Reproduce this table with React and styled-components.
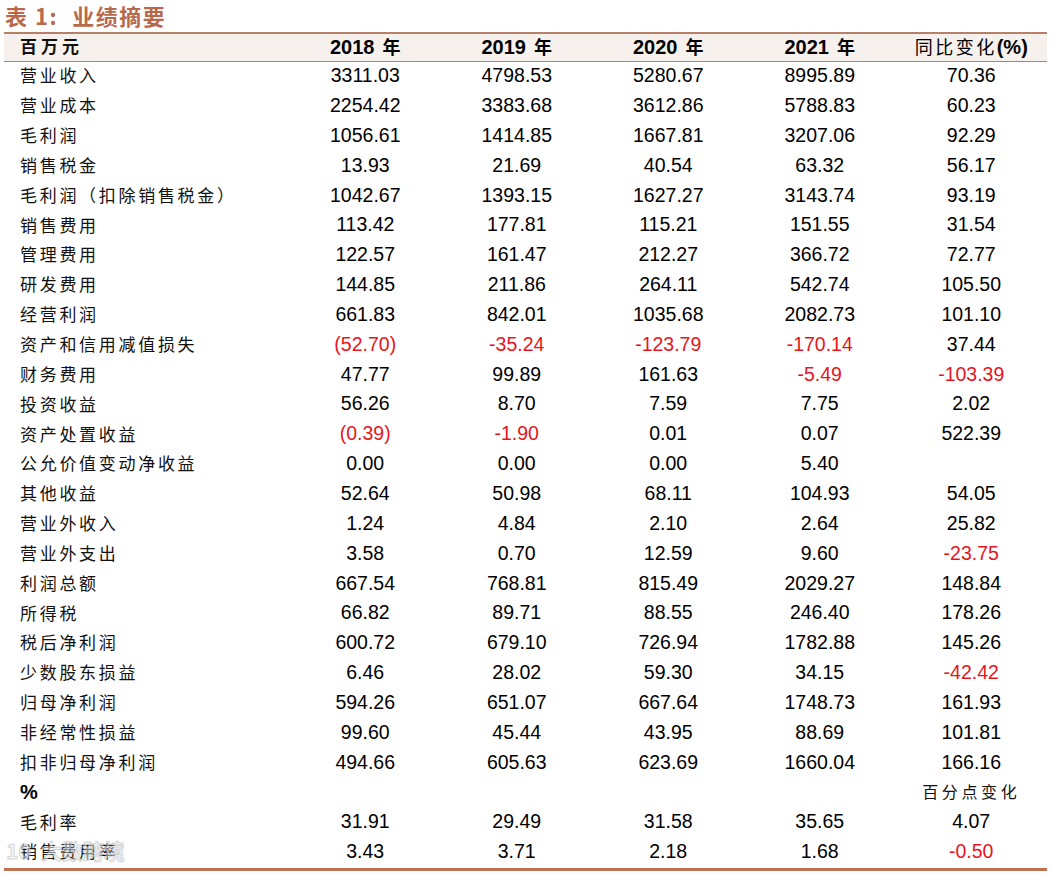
import React from "react";
import styled, {createGlobalStyle} from "styled-components";

const GlobalStyle = createGlobalStyle`
    body {
        margin: 0;
        background: #fff;
        font-family: "Liberation Sans", Arial, "Noto Sans CJK SC", sans-serif;
    }
`;

const BROWN = "#b8694b";
const RED = "#e8141c";

const Page = styled.div`
    position: relative;
    width: 1055px;
    height: 875px;
    padding: 0 0 0 4px;
    box-sizing: border-box;
    overflow: hidden;
`;

const Title = styled.div`
    height: 32px;
    display: flex;
    align-items: center;
    padding: 0 0 3px 1px;
    box-sizing: border-box;
    font-family: "Noto Sans CJK SC", sans-serif;
    font-weight: 700;
    font-size: 22px;
    color: ${BROWN};
    letter-spacing: 1.5px;

    span {
        margin-left: 14px;
    }
`;

const Table = styled.div`
    width: 1043px;
    border-top: 2px solid #b98068;
    border-bottom: 3px solid #c0714f;
`;

const Row = styled.div`
    display: grid;
    grid-template-columns: 285.5px repeat(5, 151.5px);
    height: ${({head}) => (head ? "27px" : "29.85px")};
    align-items: center;
    background: ${({head}) => (head ? "#f7f1ee" : "transparent")};
    border-bottom: ${({head}) => (head ? "1px solid #b98068" : "none")};
`;

const Label = styled.div`
    padding: 0 0 4px 16px;
    font-family: "Noto Sans CJK SC", sans-serif;
    font-size: 17px;
    letter-spacing: ${({bold}) => (bold ? "4px" : "2.7px")};
    font-weight: ${({bold}) => (bold ? 700 : 400)};
    color: #111;
    white-space: nowrap;
    line-height: 1;
`;

const Pct = styled.div`
    padding: 0 0 2px 16px;
    font-family: "Liberation Sans", Arial, sans-serif;
    font-weight: 700;
    font-size: 20px;
    color: #000;
`;

const Cell = styled.div`
    padding-bottom: 2px;
    text-align: center;
    font-family: "Liberation Sans", Arial, sans-serif;
    font-size: 19.5px;
    color: ${({neg}) => (neg ? RED : "#000")};
    line-height: 1;
`;

const HeadCell = styled.div`
    padding-bottom: 2px;
    text-align: center;
    font-family: "Liberation Sans", Arial, "Noto Sans CJK SC", sans-serif;
    font-weight: 700;
    font-size: 20px;
    color: #000;
    line-height: 1;

    small {
        font-family: "Noto Sans CJK SC", sans-serif;
        font-size: 18px;
        margin-left: 8px;
    }
`;

const HeadCjk = styled.div`
    padding-bottom: 2px;
    text-align: center;
    font-family: "Noto Sans CJK SC", sans-serif;
    font-size: 18px;
    letter-spacing: 2.5px;
    color: #000;
    line-height: 1;

    b {
        font-family: "Liberation Sans", Arial, sans-serif;
        font-weight: 700;
        font-size: 20px;
        letter-spacing: 0;
    }
`;

const Note = styled.div`
    padding-bottom: 4px;
    text-align: center;
    font-family: "Noto Sans CJK SC", sans-serif;
    font-size: 16px;
    letter-spacing: 3.6px;
    color: #111;
    line-height: 1;
`;

const Watermark = styled.div`
    position: absolute;
    left: 6px;
    bottom: 10px;
    display: flex;
    align-items: center;
    gap: 10px;
    font-family: "Noto Sans CJK SC", sans-serif;
    font-size: 21px;
    font-weight: 700;
    color: rgba(235, 235, 235, 0.55);
    -webkit-text-stroke: 1px rgba(170, 170, 170, 0.45);
    pointer-events: none;
`;

const rows = [
    ["营业收入", "3311.03", "4798.53", "5280.67", "8995.89", "70.36"],
    ["营业成本", "2254.42", "3383.68", "3612.86", "5788.83", "60.23"],
    ["毛利润", "1056.61", "1414.85", "1667.81", "3207.06", "92.29"],
    ["销售税金", "13.93", "21.69", "40.54", "63.32", "56.17"],
    ["毛利润（扣除销售税金）", "1042.67", "1393.15", "1627.27", "3143.74", "93.19"],
    ["销售费用", "113.42", "177.81", "115.21", "151.55", "31.54"],
    ["管理费用", "122.57", "161.47", "212.27", "366.72", "72.77"],
    ["研发费用", "144.85", "211.86", "264.11", "542.74", "105.50"],
    ["经营利润", "661.83", "842.01", "1035.68", "2082.73", "101.10"],
    ["资产和信用减值损失", "(52.70)", "-35.24", "-123.79", "-170.14", "37.44"],
    ["财务费用", "47.77", "99.89", "161.63", "-5.49", "-103.39"],
    ["投资收益", "56.26", "8.70", "7.59", "7.75", "2.02"],
    ["资产处置收益", "(0.39)", "-1.90", "0.01", "0.07", "522.39"],
    ["公允价值变动净收益", "0.00", "0.00", "0.00", "5.40", ""],
    ["其他收益", "52.64", "50.98", "68.11", "104.93", "54.05"],
    ["营业外收入", "1.24", "4.84", "2.10", "2.64", "25.82"],
    ["营业外支出", "3.58", "0.70", "12.59", "9.60", "-23.75"],
    ["利润总额", "667.54", "768.81", "815.49", "2029.27", "148.84"],
    ["所得税", "66.82", "89.71", "88.55", "246.40", "178.26"],
    ["税后净利润", "600.72", "679.10", "726.94", "1782.88", "145.26"],
    ["少数股东损益", "6.46", "28.02", "59.30", "34.15", "-42.42"],
    ["归母净利润", "594.26", "651.07", "667.64", "1748.73", "161.93"],
    ["非经常性损益", "99.60", "45.44", "43.95", "88.69", "101.81"],
    ["扣非归母净利润", "494.66", "605.63", "623.69", "1660.04", "166.16"],
];

const ratios = [
    ["毛利率", "31.91", "29.49", "31.58", "35.65", "4.07"],
    ["销售费用率", "3.43", "3.71", "2.18", "1.68", "-0.50"],
];

const isNeg = (v) => v.startsWith("-") || v.startsWith("(");

const DataRow = ({cells}) => (
    <Row>
        <Label>{cells[0]}</Label>
        {cells.slice(1).map((v, i) => (
            <Cell key={i} neg={isNeg(v)}>{v}</Cell>
        ))}
    </Row>
);

const App = () => (
    <>
        <GlobalStyle/>
        <Page>
            <Title>表 1:<span>业绩摘要</span></Title>
            <Table>
                <Row head>
                    <Label bold>百万元</Label>
                    {["2018", "2019", "2020", "2021"].map((y) => (
                        <HeadCell key={y}>{y}<small>年</small></HeadCell>
                    ))}
                    <HeadCjk>同比变化<b>(%)</b></HeadCjk>
                </Row>
                {rows.map((r) => <DataRow key={r[0]} cells={r}/>)}
                <Row>
                    <Pct>%</Pct>
                    <div/>
                    <div/>
                    <div/>
                    <div/>
                    <Note>百分点变化</Note>
                </Row>
                {ratios.map((r) => <DataRow key={r[0]} cells={r}/>)}
            </Table>
            <Watermark>
                <span>10</span>
                <span>大数跨境</span>
            </Watermark>
        </Page>
    </>
);

export default App;
